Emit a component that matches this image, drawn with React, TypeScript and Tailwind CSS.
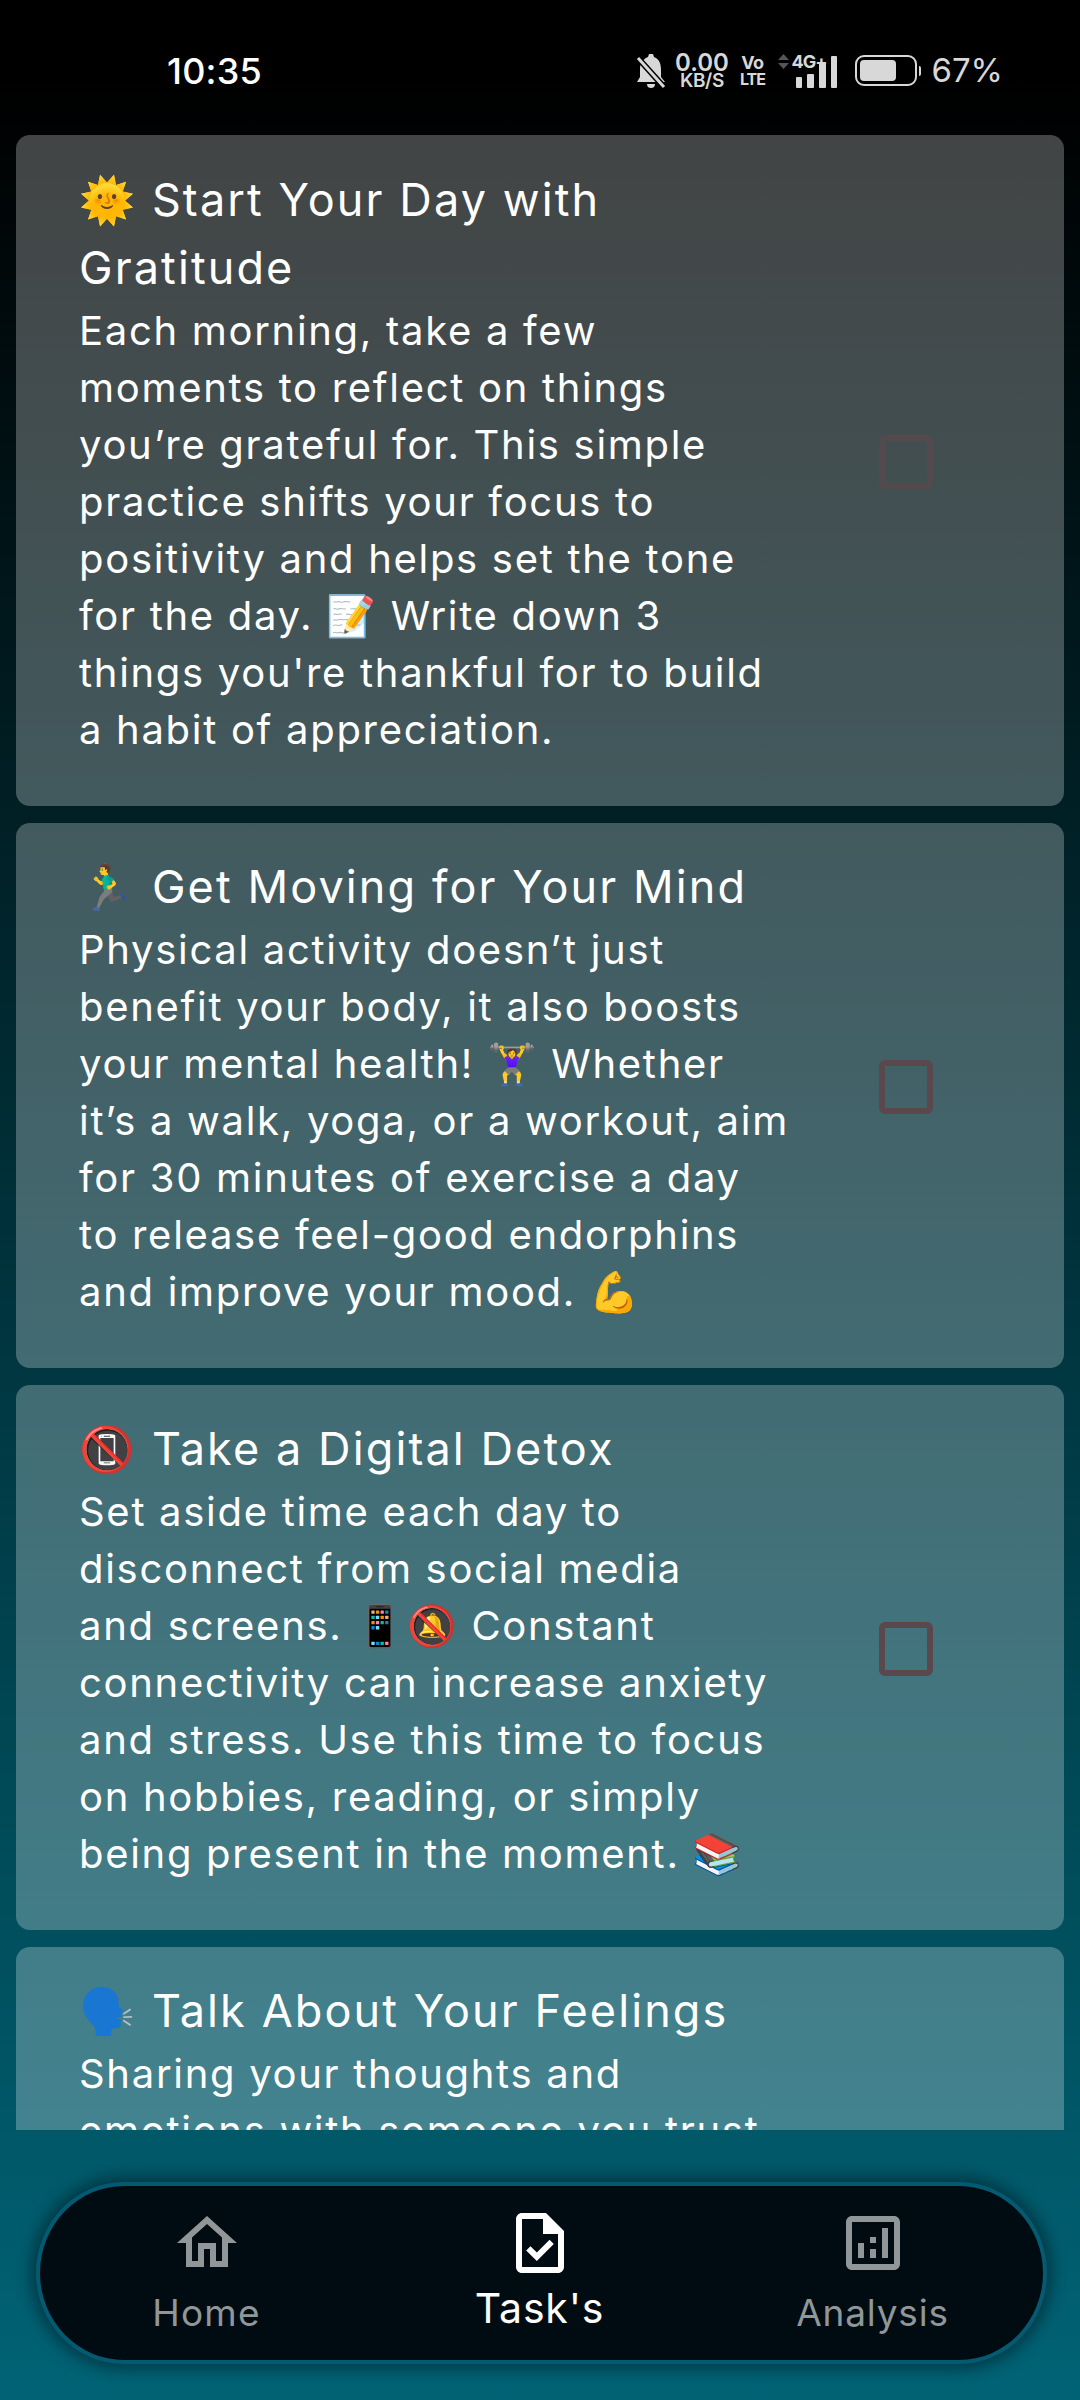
import React from "react";

const Card = ({ title, lines, h, faded, clip }: { title: string[]; lines: string[]; h?: string; faded?: boolean; clip?: boolean }) => (
  <div className={`shrink-0 bg-white/[.26] rounded-[14px] pl-[63px] flex ${clip ? "rounded-b-none items-start" : "items-center pb-[18px]"} ${h ?? ""}`}>
    <div className={`w-[800px] ${clip ? "pt-[30px]" : ""}`}>
      {title.map((t) => (
        <div key={t} className="text-[45px] leading-[68px] tracking-[2.1px] text-white whitespace-pre">{t}</div>
      ))}
      {lines.map((t) => (
        <div key={t} className="text-[40px] leading-[57px] tracking-[1.7px] text-white whitespace-pre">{t}</div>
      ))}
    </div>
    {!clip && <div className={`w-[54px] h-[54px] border-[6px] rounded-[6px] ${faded ? "border-[#5a484c]/70" : "border-[#5a484c]"}`} />}
  </div>
);

export default function App() {
  return (
    <div className="w-[1080px] h-[2400px] overflow-hidden flex flex-col bg-[linear-gradient(180deg,#000000_0%,#000_3%,#006375_100%)] font-['Inter','Noto_Color_Emoji',sans-serif]">
      <div className="h-[135px] shrink-0 flex items-center pt-[6px] pl-[167px] pr-[77px] text-white">
        <span className="text-[36px] tracking-[0.2px] font-medium">10:35</span>
        <div className="ml-auto flex items-center text-[#d8d8d8]">
          <svg width="30" height="34" viewBox="0 0 30 34" fill="#d8d8d8">
            <path d="M13 0h4l1 3c6 2 7 8 7 13v7l4 5H1l3-5v-8c0-6 3-10 8-12zM11 30h8c0 3-2 4-4 4s-4-1-4-4z" />
            <path d="M1 3l27 30" stroke="#000" strokeWidth="6" />
            <path d="M2 4l26 29" stroke="#d8d8d8" strokeWidth="3" />
          </svg>
          <div className="flex flex-col items-center w-[51px] ml-[10px] font-semibold">
            <span className="text-[24px] leading-[20px]">0.00</span>
            <span className="text-[19px] leading-[16px] tracking-[-0.4px]">KB/S</span>
          </div>
          <div className="flex flex-col items-center ml-[15px] w-[20px] font-bold">
            <span className="text-[18px] leading-[16px] tracking-[-0.5px]">Vo</span>
            <span className="text-[16px] leading-[15px] tracking-[-1px] mt-[1px]">LTE</span>
          </div>
          <div className="relative ml-[16px] w-[59px] h-[34px]">
            <svg width="59" height="34" viewBox="0 0 59 34" fill="#d8d8d8">
              <path d="M0 6l5.5-6L11 6zM0 9l5.5 6L11 9z" fill="#555" />
              <rect x="18" y="23" width="6" height="11" rx="1" />
              <rect x="29" y="20" width="7" height="14" rx="1" />
              <rect x="41" y="9" width="7" height="25" rx="1" />
              <rect x="53" y="2" width="6" height="32" rx="1" />
            </svg>
            <span className="absolute left-[13px] top-[-2px] text-[18px] leading-[20px] font-bold tracking-[-1px]">4G+</span>
          </div>
          <div className="ml-[18px] w-[62px] h-[31px] border-[2px] border-[#d8d8d8] rounded-[9px] p-[3px]">
            <div className="w-[36px] h-full bg-[#d8d8d8] rounded-[4px]" />
          </div>
          <div className="w-[2px] h-[10px] bg-[#d8d8d8] rounded-r-[2px] ml-[2px]" />
          <span className="text-[33px] ml-[10px] text-[#d8d8d8]">67%</span>
        </div>
      </div>

      <div className="h-[1995px] shrink-0 overflow-hidden px-[16px] flex flex-col gap-[17px]">
        <Card h="h-[671px]" faded title={["🌞 Start Your Day with", "Gratitude"]} lines={["Each morning, take a few", "moments to reflect on things", "you’re grateful for. This simple", "practice shifts your focus to", "positivity and helps set the tone", "for the day. 📝 Write down 3", "things you're thankful for to build", "a habit of appreciation."]} />
        <Card h="h-[545px]" title={["🏃‍♂️ Get Moving for Your Mind"]} lines={["Physical activity doesn’t just", "benefit your body, it also boosts", "your mental health! 🏋️‍♀️ Whether", "it’s a walk, yoga, or a workout, aim", "for 30 minutes of exercise a day", "to release feel-good endorphins", "and improve your mood. 💪"]} />
        <Card h="h-[545px]" title={["📵 Take a Digital Detox"]} lines={["Set aside time each day to", "disconnect from social media", "and screens. 📱🔕 Constant", "connectivity can increase anxiety", "and stress. Use this time to focus", "on hobbies, reading, or simply", "being present in the moment. 📚"]} />
        <Card clip h="h-[300px]" title={["🗣️ Talk About Your Feelings"]} lines={["Sharing your thoughts and", "emotions with someone you trust"]} />
      </div>

      <div className="flex-1 px-[36px] pt-[52px]">
        <div className="h-[182px] w-[1011px] border-[4px] border-[#045a70] rounded-[88px/91px] bg-[#010c12] shadow-[0_0_14px_6px_rgba(0,20,30,0.45)] flex items-start pt-[21px]">
          <div className="w-[333px] flex flex-col items-center text-[#919798]">
            <svg width="72" height="72" viewBox="0 0 24 24" fill="#919798">
              <path d="M12 5.69l5 4.5V18h-2v-6H9v6H7v-7.81l5-4.5M12 3L2 12h3v8h6v-6h2v6h6v-8h3L12 3z" />
            </svg>
            <span className="text-[37px] leading-[50px] mt-[9px] tracking-[1.2px]">Home</span>
          </div>
          <div className="w-[333px] flex flex-col items-center text-white">
            <svg width="72" height="72" viewBox="0 0 24 24" fill="#ffffff">
              <path d="M14 2H6c-1.1 0-1.99.9-1.99 2L4 20c0 1.1.89 2 1.99 2H18c1.1 0 2-.9 2-2V8l-6-6zm4 18H6V4h7v5h5v11zm-9.18-6.95L7.4 14.46 10.94 18l5.66-5.66-1.41-1.41-4.24 4.24-2.13-2.12z" />
            </svg>
            <span className="text-[41px] leading-[58px] tracking-[0.8px]">Task's</span>
          </div>
          <div className="w-[333px] flex flex-col items-center text-[#919798]">
            <svg width="72" height="72" viewBox="0 0 24 24" fill="#919798">
              <path d="M19 3H5c-1.1 0-2 .9-2 2v14c0 1.1.9 2 2 2h14c1.1 0 2-.9 2-2V5c0-1.1-.9-2-2-2zm0 16H5V5h14v14z" />
              <path d="M7 12h2v5H7zM15 7h2v10h-2zM11 14h2v3h-2zM11 10h2v2h-2z" />
            </svg>
            <span className="text-[37px] leading-[50px] mt-[9px] tracking-[0.8px]">Analysis</span>
          </div>
        </div>
      </div>
    </div>
  );
}
